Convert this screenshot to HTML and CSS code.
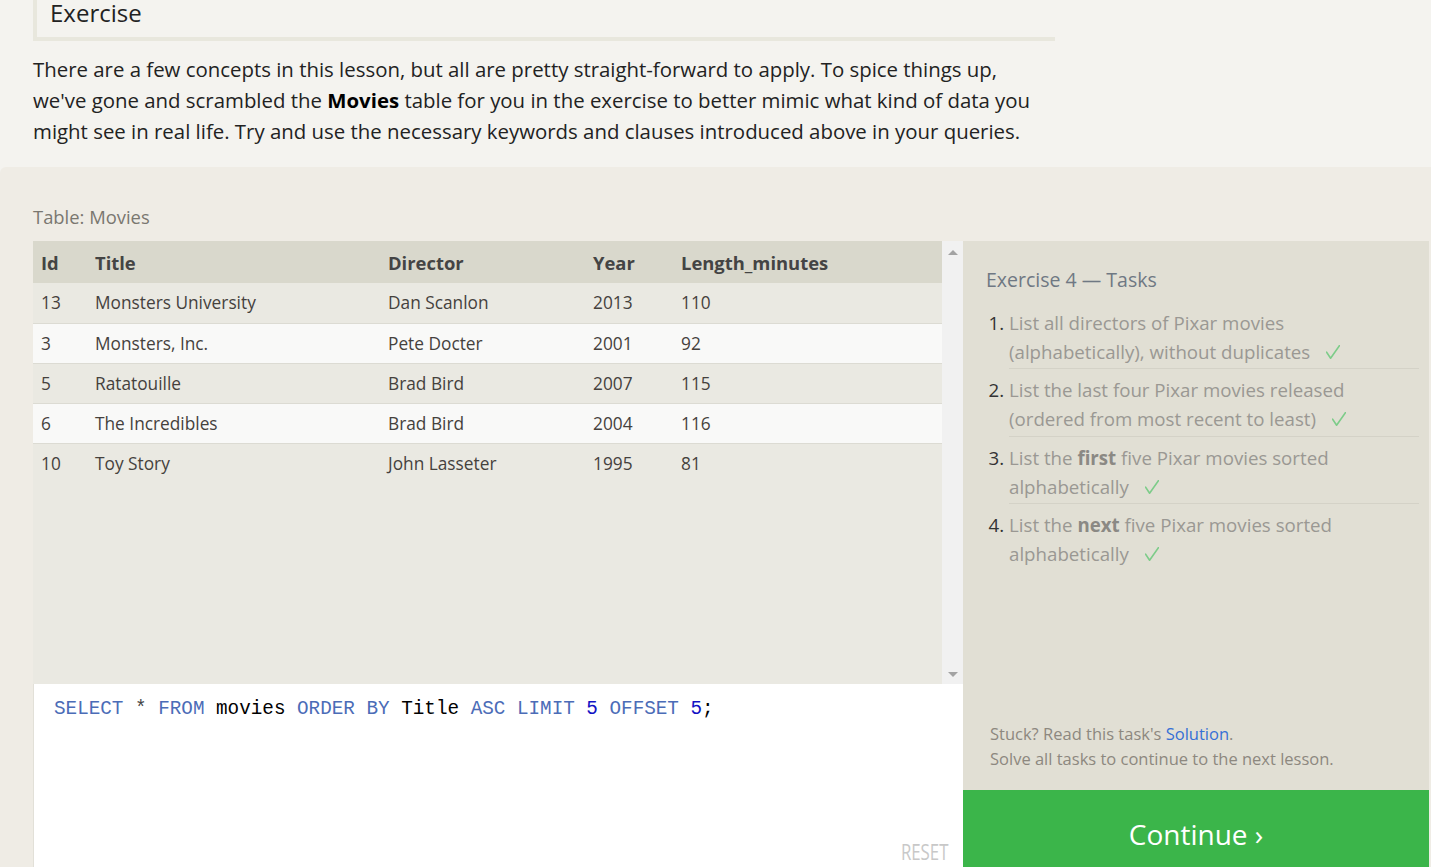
FILE: index.html
```html
<!DOCTYPE html>
<html lang="en">
<head>
<meta charset="utf-8">
<title>SQL Lesson - Exercise</title>
<link rel="stylesheet" href="styles.css">
</head>
<body>
<section class="intro">
  <h2 class="intro-title">Exercise</h2>
  <p class="intro-text">There are a few concepts in this lesson, but all are pretty straight-forward to apply. To spice things up, we've gone and scrambled the <strong>Movies</strong> table for you in the exercise to better mimic what kind of data you might see in real life. Try and use the necessary keywords and clauses introduced above in your queries.</p>
</section>

<section class="exercise">
  <div class="table-label">Table: Movies</div>
  <div class="workspace">
    <div class="work-left">
      <div class="table-view">
        <div class="table-scroll">
          <table class="data">
            <thead>
              <tr><th class="c-id">Id</th><th class="c-title">Title</th><th class="c-dir">Director</th><th class="c-year">Year</th><th>Length_minutes</th></tr>
            </thead>
            <tbody>
              <tr><td>13</td><td>Monsters University</td><td>Dan Scanlon</td><td>2013</td><td>110</td></tr>
              <tr><td>3</td><td>Monsters, Inc.</td><td>Pete Docter</td><td>2001</td><td>92</td></tr>
              <tr><td>5</td><td>Ratatouille</td><td>Brad Bird</td><td>2007</td><td>115</td></tr>
              <tr><td>6</td><td>The Incredibles</td><td>Brad Bird</td><td>2004</td><td>116</td></tr>
              <tr><td>10</td><td>Toy Story</td><td>John Lasseter</td><td>1995</td><td>81</td></tr>
            </tbody>
          </table>
        </div>
        <div class="scrollbar">
          <span class="arrow arrow-up"></span>
          <span class="arrow arrow-down"></span>
        </div>
      </div>
      <div class="editor">
        <pre class="code"><span class="kw">SELECT</span> <span class="op">*</span> <span class="kw">FROM</span> movies <span class="kw">ORDER BY</span> Title <span class="kw">ASC</span> <span class="kw">LIMIT</span> <span class="num">5</span> <span class="kw">OFFSET</span> <span class="num">5</span>;</pre>
        <span class="reset">RESET</span>
      </div>
    </div>

    <aside class="tasks">
      <div class="tasks-body">
        <h3 class="tasks-title">Exercise 4 — Tasks</h3>
        <ol class="task-list">
          <li>List all directors of Pixar movies (alphabetically), without duplicates <svg class="check" width="14" height="14" viewBox="0 0 14 14"><polyline points="0.6,7.2 4.6,13.2 13.4,0.6"/></svg></li>
          <li>List the last four Pixar movies released (ordered from most recent to least) <svg class="check" width="14" height="14" viewBox="0 0 14 14"><polyline points="0.6,7.2 4.6,13.2 13.4,0.6"/></svg></li>
          <li>List the <strong>first</strong> five Pixar movies sorted alphabetically <svg class="check" width="14" height="14" viewBox="0 0 14 14"><polyline points="0.6,7.2 4.6,13.2 13.4,0.6"/></svg></li>
          <li>List the <strong>next</strong> five Pixar movies sorted alphabetically <svg class="check" width="14" height="14" viewBox="0 0 14 14"><polyline points="0.6,7.2 4.6,13.2 13.4,0.6"/></svg></li>
        </ol>
        <div class="tasks-footer">
          <div>Stuck? Read this task's <a class="link" href="#">Solution</a>.</div>
          <div>Solve all tasks to continue to the next lesson.</div>
        </div>
      </div>
      <button class="continue">Continue ›</button>
    </aside>
  </div>
</section>
</body>
</html>
```

FILE: styles.css
```css
* { box-sizing: border-box; }

html, body {
  margin: 0;
  height: 867px;
  overflow: hidden;
}

body {
  background: #f4f3ef;
  font-family: "Open Sans", "Noto Sans", sans-serif;
  color: #222;
}

/* ---------- intro ---------- */
.intro {
  padding: 0 33px;
  width: 1088px;
}

.intro-title {
  margin: -2px 0 0 0;
  padding: 0 0 9px 13px;
  width: 1022px;
  border-left: 4px solid #e8e7dd;
  border-bottom: 4px solid #e8e7dd;
  font-size: 24px;
  line-height: 30px;
  font-weight: normal;
  color: #222;
}

.intro-text {
  margin: 13px 0 0 0;
  max-width: 1010px;
  font-size: 20.4px;
  line-height: 31px;
  color: #222;
}

.intro-text strong { color: #000; }

/* ---------- exercise ---------- */
.exercise {
  margin-top: 20px;
  background: #efece5;
  border-top-left-radius: 6px;
  padding: 38px 2px 0 33px;
  height: 711px;
}

.table-label {
  font-size: 18.4px;
  line-height: 24px;
  color: #7a7770;
  margin-bottom: 12px;
}

.workspace {
  display: flex;
  height: 637px;
}

.work-left {
  width: 930px;
  display: flex;
  flex-direction: column;
}

.table-view {
  display: flex;
  height: 443px;
}

.table-scroll {
  width: 909px;
  background: #eae9e2;
}

.data {
  width: 100%;
  border-collapse: collapse;
  color: #45413d;
}

.data th {
  background: #d9d8cc;
  height: 42px;
  text-align: left;
  font-size: 18.4px;
  font-weight: bold;
  color: #444;
  padding: 0 8px;
}

.data td {
  height: 40px;
  padding: 0 8px;
  font-size: 17.3px;
  border-bottom: 1px solid #dcdbd3;
}

.data tbody tr:last-child td { border-bottom: none; }

.data tbody tr:nth-child(odd) td { background: #eae9e2; }
.data tbody tr:nth-child(even) td { background: #f9f9f8; }

.c-id { width: 54px; }
.c-title { width: 293px; }
.c-dir { width: 205px; }
.c-year { width: 88px; }

.scrollbar {
  width: 21px;
  background: #f1f1f1;
  display: flex;
  flex-direction: column;
  justify-content: space-between;
  align-items: center;
  padding: 9px 0 7px 0;
}

.arrow {
  width: 0;
  height: 0;
  border-left: 5px solid transparent;
  border-right: 5px solid transparent;
}

.arrow-up { border-bottom: 5px solid #a3a3a3; }
.arrow-down { border-top: 5px solid #a3a3a3; }

.editor {
  position: relative;
  flex: 1;
  background: #fff;
  border-left: 1px solid #e2e0d8;
}

.code {
  margin: 0;
  padding: 13px 0 0 20px;
  font-family: "Liberation Mono", monospace;
  font-size: 19.3px;
  line-height: 24px;
  color: #000;
}

.kw { color: #4b6cb7; }
.op { color: #444; }
.num { color: #1212c4; }

.reset {
  position: absolute;
  right: 15px;
  bottom: 14px;
  font-size: 21px;
  line-height: 24px;
  color: #c8c8c8;
  transform: scaleX(0.8);
  transform-origin: right center;
}

/* ---------- tasks ---------- */
.tasks {
  flex: 1;
  display: flex;
  flex-direction: column;
  background: #e1dfd4;
}

.tasks-body {
  flex: 1;
  display: flex;
  flex-direction: column;
  padding: 25px 10px 19px 23px;
}

.tasks-title {
  margin: 0;
  font-size: 19.5px;
  line-height: 28px;
  font-weight: normal;
  color: #6f7883;
}

.task-list {
  margin: 8px 0 0 0;
  padding: 0 0 0 23px;
}

.task-list li {
  font-size: 18.7px;
  line-height: 29px;
  color: #9a9893;
  padding: 6px 0 2.3px 0;
  border-bottom: 1px solid #d4d2c7;
}

.task-list li:last-child { border-bottom: none; }

.task-list li::marker { color: #333; }

.task-list strong { color: #8b8984; }

.check {
  margin-left: 11px;
  vertical-align: baseline;
  fill: none;
  stroke: #7dcc89;
  stroke-width: 1.6;
  stroke-linecap: round;
  stroke-linejoin: round;
}

.tasks-footer {
  margin-top: auto;
  padding-left: 4px;
  font-size: 16.5px;
  line-height: 25px;
  color: #8d887f;
}

.link {
  color: #3670d6;
  text-decoration: none;
}

.continue {
  display: block;
  width: 100%;
  height: 88px;
  border: none;
  background: #3bb54a;
  color: #fff;
  font-family: inherit;
  font-size: 28px;
  padding: 0;
  cursor: pointer;
}
```
